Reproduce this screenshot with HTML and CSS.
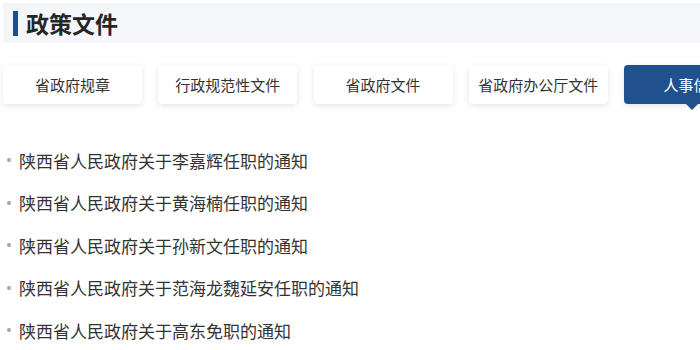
FILE: index.html
```html
<!DOCTYPE html>
<html lang="zh-cn">
<head>
    <meta charset="UTF-8">
    <title>政策文件</title>
    <link rel="stylesheet" href="styles.css">
</head>
<body>
    <div class="page">
        <div class="head">
            <span class="head-bar"></span>
            <h2 class="head-title">政策文件</h2>
        </div>

        <div class="tabs">
            <div class="tab">省政府规章</div>
            <div class="tab">行政规范性文件</div>
            <div class="tab">省政府文件</div>
            <div class="tab">省政府办公厅文件</div>
            <div class="tab active">人事信息</div>
        </div>

        <ul class="list">
            <li><a href="#">陕西省人民政府关于李嘉辉任职的通知</a></li>
            <li><a href="#">陕西省人民政府关于黄海楠任职的通知</a></li>
            <li><a href="#">陕西省人民政府关于孙新文任职的通知</a></li>
            <li><a href="#">陕西省人民政府关于范海龙魏延安任职的通知</a></li>
            <li><a href="#">陕西省人民政府关于高东免职的通知</a></li>
        </ul>
    </div>
</body>
</html>
```

FILE: styles.css
```css
body {
    margin: 0;
    font-family: "Noto Sans CJK SC", "Noto Sans", sans-serif;
    color: #333;
    background: #fff;
    overflow: hidden;
}
.page {
    width: 700px;
    height: 350px;
    overflow: hidden;
}
.head {
    display: flex;
    align-items: center;
    height: 40px;
    margin: 3px 0 0 3px;
    background-color: #f5f6fa;
}
.head-bar {
    display: inline-block;
    width: 5px;
    height: 25px;
    margin-left: 10px;
    background-color: #1f4e8c;
}
.head-title {
    margin: 0 0 0 8px;
    font-size: 23px;
    font-weight: bold;
    color: #262626;
    line-height: 1;
}
.tabs {
    display: flex;
    gap: 16.25px;
    margin: 22px 0 0 3px;
    white-space: nowrap;
}
.tab {
    position: relative;
    flex: 0 0 139px;
    height: 39px;
    line-height: 39px;
    text-align: center;
    font-size: 15px;
    color: #333;
    background: #fff;
    border-radius: 4px;
    box-shadow: 0 2px 6px rgba(0, 0, 0, 0.1);
}
.tab.active {
    background-color: #21508f;
    color: #fff;
}
.tab.active::after {
    content: "";
    position: absolute;
    left: 62px;
    bottom: -6px;
    border-left: 6px solid transparent;
    border-right: 6px solid transparent;
    border-top: 6px solid #21508f;
}
.list {
    list-style: none;
    margin: 35px 0 0 0;
    padding: 0;
}
.list li {
    display: flex;
    align-items: center;
    height: 42.5px;
    padding-left: 7px;
}
.list li::before {
    content: "";
    width: 4px;
    height: 4px;
    margin-right: 8px;
    background-color: #a5a5a5;
    border-radius: 2px;
}
.list a {
    font-size: 17px;
    color: #333;
    text-decoration: none;
}
```
